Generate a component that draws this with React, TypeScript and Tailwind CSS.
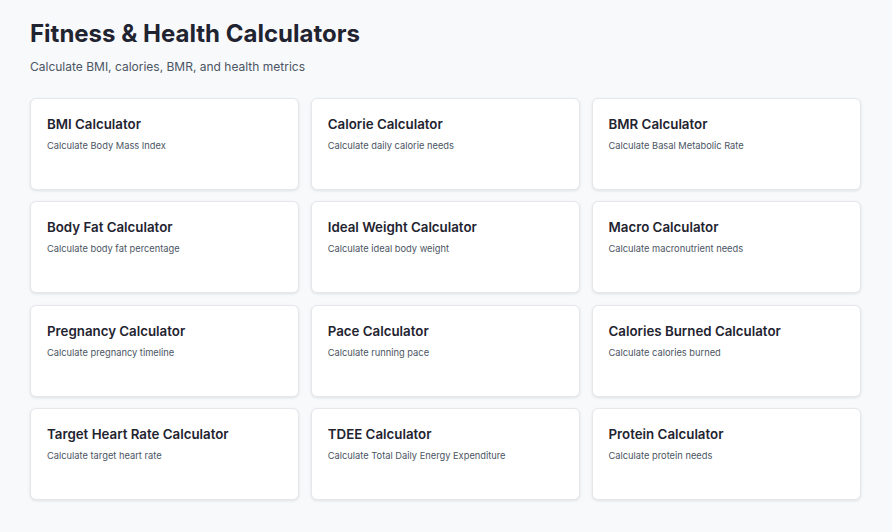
const calculators = [
  { title: "BMI Calculator", desc: "Calculate Body Mass Index" },
  { title: "Calorie Calculator", desc: "Calculate daily calorie needs" },
  { title: "BMR Calculator", desc: "Calculate Basal Metabolic Rate" },
  { title: "Body Fat Calculator", desc: "Calculate body fat percentage" },
  { title: "Ideal Weight Calculator", desc: "Calculate ideal body weight" },
  { title: "Macro Calculator", desc: "Calculate macronutrient needs" },
  { title: "Pregnancy Calculator", desc: "Calculate pregnancy timeline" },
  { title: "Pace Calculator", desc: "Calculate running pace" },
  { title: "Calories Burned Calculator", desc: "Calculate calories burned" },
  { title: "Target Heart Rate Calculator", desc: "Calculate target heart rate" },
  { title: "TDEE Calculator", desc: "Calculate Total Daily Energy Expenditure" },
  { title: "Protein Calculator", desc: "Calculate protein needs" },
];

export default function App() {
  return (
    <div className="min-h-[532px] bg-[#f8f9fb] pl-[30px] pr-[31px] pt-[18px] pb-8 font-['Inter',sans-serif]">
      <h1 className="text-[24px] leading-[32px] font-bold text-[#1f2430]">Fitness &amp; Health Calculators</h1>
      <p className="mt-[8px] text-[12px] leading-[18px] text-[#4b5563]">Calculate BMI, calories, BMR, and health metrics</p>

      <div className="mt-[22px] grid grid-cols-3 gap-x-[11.3px] gap-y-[11.4px]">
        {calculators.map((c) => (
          <div
            key={c.title}
            className="h-[92px] rounded-md border border-[#e5e7eb] bg-white px-4 pt-[16px] shadow-[0_1px_3px_rgba(0,0,0,0.1)]"
          >
            <h3 className="text-[13.3px] leading-[18px] font-semibold text-[#1f2430]">{c.title}</h3>
            <p className="mt-[6px] text-[9.3px] leading-[13px] text-[#4b5563]">{c.desc}</p>
          </div>
        ))}
      </div>
    </div>
  );
}
